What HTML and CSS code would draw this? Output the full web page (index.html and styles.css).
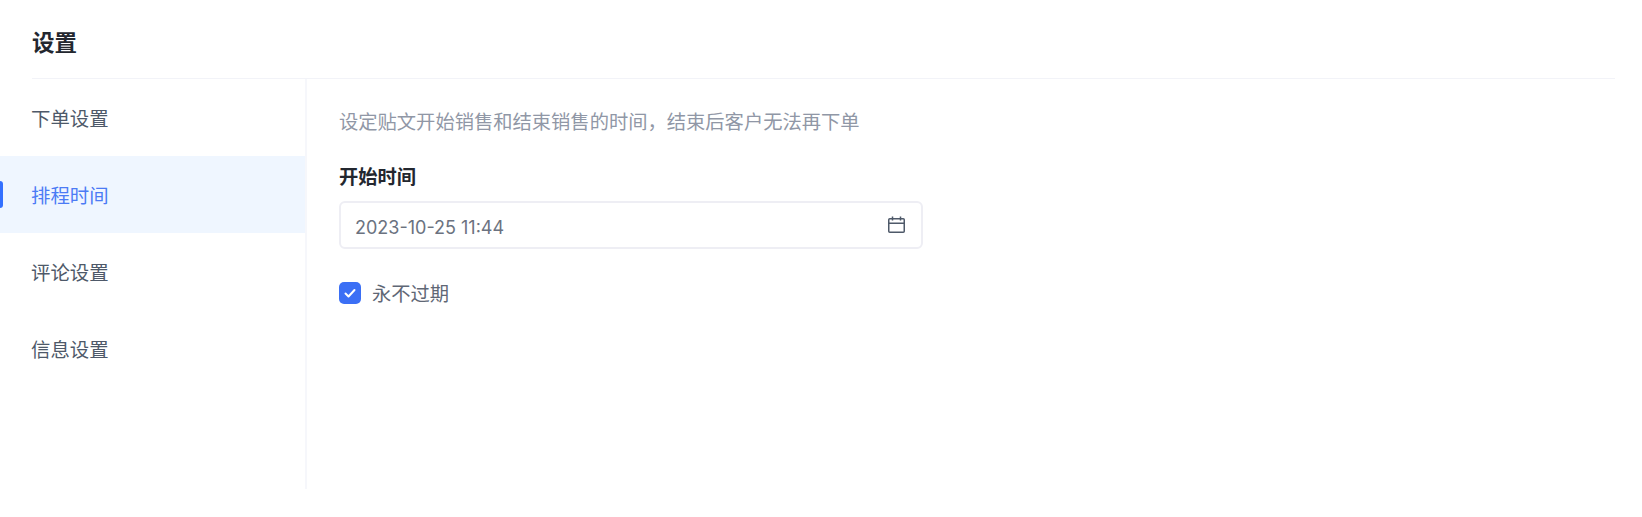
FILE: index.html
```html
<!DOCTYPE html>
<html lang="zh-CN">
<head>
    <meta charset="UTF-8">
    <title>设置</title>
    <link rel="stylesheet" href="styles.css">
</head>
<body>
    <div class="panel">
        <h1 class="panel-title">设置</h1>
        <div class="panel-body">
            <ul class="side-menu">
                <li class="side-item">下单设置</li>
                <li class="side-item active">排程时间</li>
                <li class="side-item">评论设置</li>
                <li class="side-item">信息设置</li>
            </ul>
            <div class="content">
                <p class="hint">设定贴文开始销售和结束销售的时间，结束后客户无法再下单</p>
                <div class="field-label">开始时间</div>
                <div class="date-input">
                    <span>2023-10-25 11:44</span>
                    <svg class="calendar-icon" width="20" height="20" viewBox="0 0 20 20" fill="none" stroke="#4e5969" stroke-width="1.5">
                        <rect x="1.75" y="3.75" width="15.5" height="13.5" rx="1"/>
                        <path d="M1.75 8.25h15.5M5.5 1.5v4M13.5 1.5v4"/>
                    </svg>
                </div>
                <label class="check-row">
                    <span class="check-box">
                        <svg width="14" height="14" viewBox="0 0 14 14" fill="none" stroke="#fff" stroke-width="2" stroke-linecap="round" stroke-linejoin="round">
                            <path d="M2.5 7.5l3 3 6-6.5"/>
                        </svg>
                    </span>
                    <span>永不过期</span>
                </label>
            </div>
        </div>
    </div>
</body>
</html>
```

FILE: styles.css
```css
* {
    margin: 0;
    padding: 0;
    box-sizing: border-box;
}

body {
    width: 1642px;
    height: 517px;
    overflow: hidden;
    background-color: #ffffff;
    font-family: "Noto Sans CJK SC", "Inter", sans-serif;
}

.panel {
    height: 489px;
    padding-right: 27px;
    display: flex;
    flex-direction: column;
}

.panel-title {
    height: 79px;
    margin-left: 32px;
    border-bottom: 1px solid #f2f3f8;
    font-size: 22.5px;
    font-weight: 700;
    line-height: 83px;
    color: #23272f;
}

.panel-body {
    flex: 1;
    display: flex;
}

.side-menu {
    width: 307px;
    border-right: 2px solid #f6f7fb;
    list-style: none;
}

.side-item {
    position: relative;
    height: 77px;
    padding-left: 31px;
    font-size: 19.4px;
    line-height: 77px;
    color: #4e5969;
}

.side-item.active {
    background-color: #eff6ff;
    color: #4b7bf5;
}

.side-item.active::before {
    content: "";
    position: absolute;
    left: 0;
    top: 25px;
    width: 3px;
    height: 27px;
    border-radius: 0 3px 3px 0;
    background-color: #3370ff;
}

.content {
    flex: 1;
    padding: 28px 0 0 32px;
}

.hint {
    font-size: 19.3px;
    line-height: 28px;
    color: #9097a6;
}

.field-label {
    margin-top: 27px;
    font-size: 19.3px;
    font-weight: 700;
    line-height: 28px;
    color: #23272f;
}

.date-input {
    width: 584px;
    height: 48px;
    margin-top: 11px;
    padding: 0 15px;
    display: flex;
    align-items: center;
    justify-content: space-between;
    border: 2px solid #eeeef4;
    border-radius: 6px;
    font-family: "Inter", sans-serif;
    font-size: 18px;
    line-height: 48px;
    color: #6b7280;
}

.date-input span {
    padding-top: 5px;
    margin-left: -1px;
}

.calendar-icon {
    margin-right: -1px;
}

.check-row {
    margin-top: 30px;
    display: flex;
    align-items: center;
    gap: 11px;
    font-size: 19.3px;
    line-height: 28px;
    color: #5f6775;
}

.check-box {
    width: 22px;
    height: 22px;
    display: flex;
    align-items: center;
    justify-content: center;
    border-radius: 5px;
    background-color: #3b6ff5;
}
```
